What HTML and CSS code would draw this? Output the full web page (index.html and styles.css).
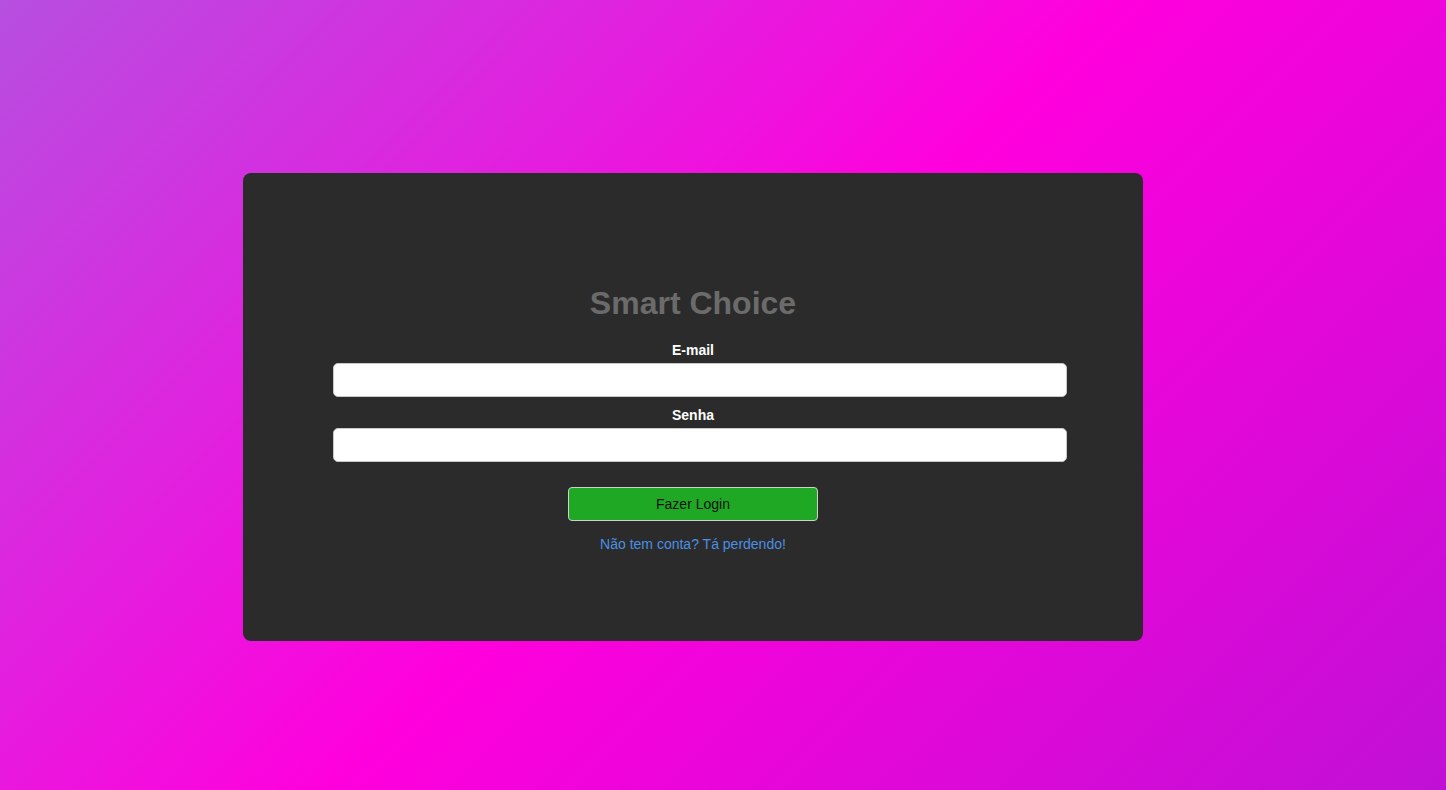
FILE: index.html
```html
<!DOCTYPE html>
<html lang="pt-BR">
<head>
<meta charset="UTF-8">
<title>Smart Choice</title>
<link rel="stylesheet" href="styles.css">
</head>
<body>
<main class="page">
  <section class="card">
    <form class="form">
      <h1 class="title">Smart Choice</h1>
      <label class="label" for="email">E-mail</label>
      <input class="input" id="email" type="email">
      <label class="label" for="senha">Senha</label>
      <input class="input" id="senha" type="password">
      <button class="btn" type="button">Fazer Login</button>
      <a class="link" href="#">Não tem conta? Tá perdendo!</a>
    </form>
  </section>
</main>
</body>
</html>
```
FILE: styles.css
```css
html, body {
  margin: 0;
  padding: 0;
  height: 100%;
}
body {
  font-family: "Liberation Sans", Arial, sans-serif;
  background: linear-gradient(135deg, #b64fe0 0%, #ff00dd 50%, #c010d5 100%);
  min-height: 100vh;
}
.page {
  padding: 173px 0 0 243px;
  box-sizing: border-box;
  height: 100vh;
}
.card {
  width: 900px;
  height: 468px;
  background: #2b2b2b;
  border-radius: 8px;
  display: flex;
  justify-content: center;
  box-sizing: border-box;
  padding-top: 110px;
}
.form {
  width: 720px;
  display: flex;
  flex-direction: column;
  align-items: center;
}
.title {
  margin: 0 0 19px;
  font-size: 32px;
  font-weight: bold;
  color: #6b6b6b;
  line-height: 40px;
}
.label {
  color: #ffffff;
  font-weight: bold;
  font-size: 14px;
  line-height: 16px;
  margin-bottom: 5px;
}
.input {
  align-self: flex-start;
  width: 734px;
  height: 34px;
  box-sizing: border-box;
  border: 1px solid #c8c8c8;
  border-radius: 5px;
  background: #ffffff;
  margin: 0 0 10px;
  padding: 0 8px;
  font-size: 14px;
}
.btn {
  margin-top: 15px;
  width: 250px;
  height: 34px;
  box-sizing: border-box;
  background: #1fa824;
  border: 1px solid #d0d0d0;
  border-radius: 4px;
  color: #111111;
  font-family: "Liberation Sans", Arial, sans-serif;
  font-size: 14px;
  cursor: pointer;
}
.link {
  margin-top: 15px;
  color: #4a90e2;
  font-size: 14px;
  line-height: 16px;
  text-decoration: none;
}
```
